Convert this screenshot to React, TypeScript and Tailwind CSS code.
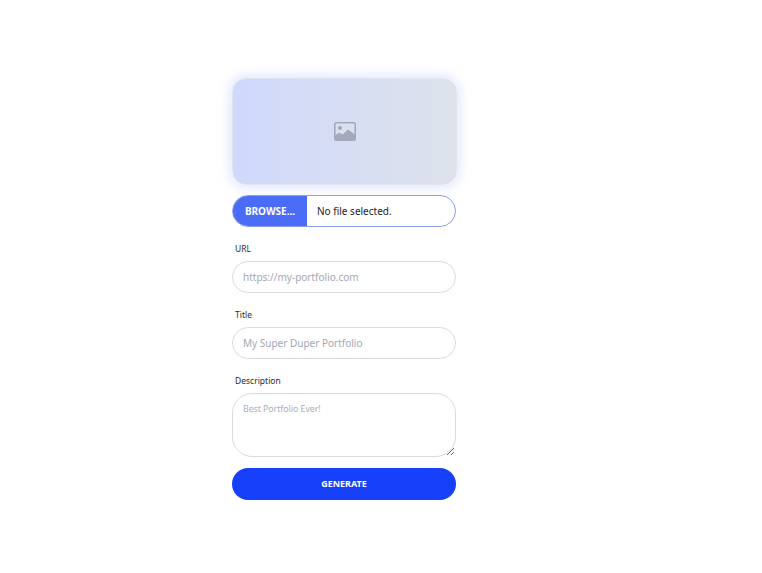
const FONT = "font-['Noto_Sans','Open_Sans',sans-serif]";

function ImagePlaceholder() {
  return (
    <div className="flex h-[107px] w-[225px] items-center justify-center rounded-[14px] border border-[#e0e4ee] bg-gradient-to-r from-[#d0d9fc] to-[#dde2ea] shadow-[0_0_12px_2px_rgba(170,185,250,0.4)]">
      <svg width="22" height="19" viewBox="0 0 22 19">
        <rect x="0" y="0" width="22" height="19" rx="2.5" fill="#a3a8bd" />
        <rect x="1.6" y="1.6" width="18.8" height="15.8" rx="1" fill="#dbe0f0" />
        <circle cx="6" cy="6" r="2" fill="#a3a8bd" />
        <path d="M1 18V13.5L5 10.5L8.5 12.5L14 7.5L21 12.5V18Z" fill="#a3a8bd" />
      </svg>
    </div>
  );
}

function Field({ label, placeholder, id }: { label: string; placeholder: string; id: string }) {
  return (
    <div className="flex flex-col">
      <label htmlFor={id} className="mb-[5px] pl-[3px] text-[8.5px] leading-[14px] text-[#2b2b33]">
        {label}
      </label>
      <input
        id={id}
        placeholder={placeholder}
        className="h-[32px] w-[224px] rounded-full border border-[#d8dbe3] bg-white px-[10px] text-[10px] outline-none placeholder:text-[#a3a7b3]"
      />
    </div>
  );
}

export default function App() {
  return (
    <div className={`flex min-h-[573px] bg-white pl-[232px] pt-[78px] ${FONT}`}>
      <form className="flex w-[224px] flex-col">
        <ImagePlaceholder />

        <div className="mt-[10px] flex h-[32px] w-[224px] overflow-hidden rounded-full border border-[#8b9fe8] bg-white">
          <button type="button" className="w-[74px] bg-[#4a6cf7] text-[10px] font-bold text-white">
            BROWSE...
          </button>
          <span className="flex items-center pl-[10px] text-[10px] text-[#22222a]">No file selected.</span>
        </div>

        <div className="mt-[15px] flex flex-col gap-[15px]">
          <Field id="url" label="URL" placeholder="https://my-portfolio.com" />
          <Field id="title" label="Title" placeholder="My Super Duper Portfolio" />
          <div className="flex flex-col">
            <label htmlFor="description" className="mb-[5px] pl-[3px] text-[8.5px] leading-[14px] text-[#2b2b33]">
              Description
            </label>
            <textarea
              id="description"
              placeholder="Best Portfolio Ever!"
              className="block h-[64px] w-[224px] rounded-[20px] border border-[#d8dbe3] bg-white px-[10px] py-[9px] text-[8.7px] outline-none placeholder:text-[#a9adb8]"
            />
          </div>
        </div>

        <button type="button" className="mt-[11px] h-[32px] w-[224px] rounded-full bg-[#1740fb] text-[9px] font-bold text-white">
          GENERATE
        </button>
      </form>
    </div>
  );
}
